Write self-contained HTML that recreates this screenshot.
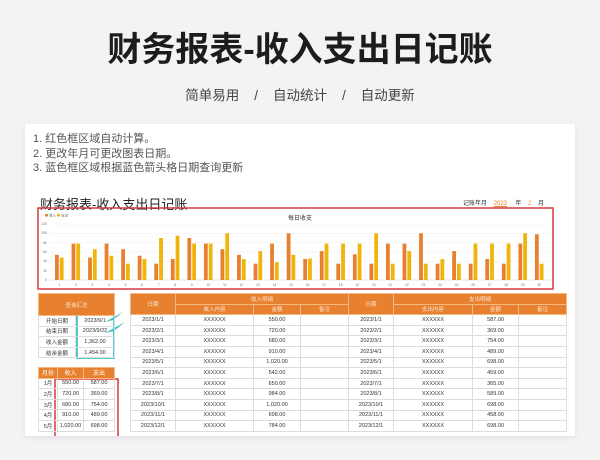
<!DOCTYPE html>
<html><head><meta charset="utf-8"><style>
*{margin:0;padding:0;box-sizing:border-box}
body{width:600px;height:460px;background:#f3f3f4;font-family:"Liberation Sans","Noto Sans CJK SC",sans-serif;position:relative;overflow:hidden}
.h1{position:absolute;top:22px;left:0;width:600px;text-align:center;font-size:34px;font-weight:bold;color:#1c1c1c;letter-spacing:0px}
.sub{position:absolute;top:84px;left:0;width:600px;text-align:center;font-size:13.5px;color:#444;word-spacing:0}
.card{position:absolute;left:25px;top:124px;width:550px;height:312px;background:#fff;box-shadow:0 2px 6px rgba(0,0,0,.08);overflow:hidden}
.abs{position:absolute}
.notes{left:8px;top:8px;font-size:11px;color:#555;line-height:14.5px}
.t{font-size:6px;color:#333;text-align:center}
table{border-collapse:collapse;position:absolute;table-layout:fixed}
td{border:1px solid #ddd;font-size:5.5px;color:#333;text-align:center;height:10.6px;padding:0;white-space:nowrap;overflow:hidden}
td.o{background:#e8812f;color:#fde6d0;border-color:#f5b880}
</style></head><body>
<div class="h1">财务报表-收入支出日记账</div>
<div class="sub">简单易用 &nbsp;&nbsp;&nbsp;/&nbsp;&nbsp;&nbsp; 自动统计 &nbsp;&nbsp;&nbsp;/&nbsp;&nbsp;&nbsp; 自动更新</div>
<div class="card">
<div class="abs notes">1. 红色框区域自动计算。<br>2. 更改年月可更改图表日期。<br>3. 蓝色框区域根据蓝色箭头格日期查询更新</div>
<div class="abs" style="left:15px;top:70px;font-size:13px;color:#222">财务报表-收入支出日记账</div>
<div class="abs" style="left:438px;top:74px;font-size:6px;color:#333">记账年月 &nbsp;&nbsp;&nbsp;<span style="color:#e8812f;text-decoration:underline">2023</span> &nbsp;&nbsp;&nbsp;&nbsp;年 &nbsp;&nbsp;&nbsp;<span style="color:#e8812f">2</span> &nbsp;&nbsp;&nbsp;月</div>
<svg class="abs" style="left:0;top:0" width="550" height="312">
<rect x="13" y="84" width="515" height="81" fill="none" stroke="#d9393f" stroke-width="1.5"/>
<text x="275" y="96" font-size="6" text-anchor="middle" fill="#333" font-family="Noto Sans CJK SC">每日收支</text>
<rect x="20" y="90" width="3" height="2.5" fill="#e8812f"/><text x="24" y="92.5" font-size="3.5" fill="#666">收入</text>
<rect x="32" y="90" width="3" height="2.5" fill="#f0b50a"/><text x="36" y="92.5" font-size="3.5" fill="#666">支出</text>
<g stroke="#eee" stroke-width="0.5">
<line x1="25" x2="525" y1="100" y2="100"/><line x1="25" x2="525" y1="109.3" y2="109.3"/><line x1="25" x2="525" y1="118.7" y2="118.7"/><line x1="25" x2="525" y1="128" y2="128"/><line x1="25" x2="525" y1="137.3" y2="137.3"/><line x1="25" x2="525" y1="146.7" y2="146.7"/><line x1="25" x2="525" y1="156" y2="156" stroke="#ccc"/>
</g>
<g font-size="3.5" fill="#777" text-anchor="end"><text x="22" y="101">120</text><text x="22" y="110">100</text><text x="22" y="120">80</text><text x="22" y="129">60</text><text x="22" y="138">40</text><text x="22" y="148">20</text><text x="22" y="157">0</text></g>
<g id="bars"></g>
<g id="xl" font-size="3.5" fill="#777" text-anchor="middle"></g>
<rect x="52" y="190" width="37" height="44" fill="none" stroke="#3cc3c8" stroke-width="1.8"/>
<path d="M80 198 L98 188 L88 196 Z M80 209 L100 198 L89 207 Z" fill="#3cc3c8"/>
<rect x="30" y="255" width="63" height="60" fill="none" stroke="#d9393f" stroke-width="1.5"/>
</svg>
<table style="left:13px;top:169px;width:76px">
<col style="width:37px"><col style="width:39px">
<tr><td class="o" colspan="2" style="height:22px">查询汇总</td></tr>
<tr><td>开始日期</td><td>2023/9/1</td></tr>
<tr><td>结束日期</td><td>2023/9/22</td></tr>
<tr><td>收入金额</td><td>1,362.00</td></tr>
<tr><td>结余金额</td><td>1,454.00</td></tr>
</table>
<table style="left:13px;top:243px;width:76px">
<col style="width:19px"><col style="width:26px"><col style="width:31px">
<tr><td class="o" style="font-size:6px;color:#fff">月份</td><td class="o" style="font-size:6px;color:#fff">收入</td><td class="o" style="font-size:6px;color:#fff">支出</td></tr>
<tr><td>1月</td><td>550.00</td><td>587.00</td></tr>
<tr><td>2月</td><td>720.00</td><td>369.00</td></tr>
<tr><td>3月</td><td>680.00</td><td>754.00</td></tr>
<tr><td>4月</td><td>910.00</td><td>489.00</td></tr>
<tr><td>5月</td><td>1,020.00</td><td>698.00</td></tr>
</table>
<table style="left:105px;top:169px;width:436px">
<col style="width:45px"><col style="width:78px"><col style="width:47px"><col style="width:48px"><col style="width:45px"><col style="width:79px"><col style="width:46px"><col style="width:48px">
<tr><td class="o" rowspan="2">日期</td><td class="o" colspan="3">收入明细</td><td class="o" rowspan="2">日期</td><td class="o" colspan="3">支出明细</td></tr>
<tr><td class="o">收入内容</td><td class="o">金额</td><td class="o">备注</td><td class="o">支出内容</td><td class="o">金额</td><td class="o">备注</td></tr>
<tr><td>2023/1/1</td><td>XXXXXX</td><td>550.00</td><td></td><td>2023/1/1</td><td>XXXXXX</td><td>587.00</td><td></td></tr>
<tr><td>2023/2/1</td><td>XXXXXX</td><td>720.00</td><td></td><td>2023/2/1</td><td>XXXXXX</td><td>369.00</td><td></td></tr>
<tr><td>2023/3/1</td><td>XXXXXX</td><td>680.00</td><td></td><td>2023/3/1</td><td>XXXXXX</td><td>754.00</td><td></td></tr>
<tr><td>2023/4/1</td><td>XXXXXX</td><td>910.00</td><td></td><td>2023/4/1</td><td>XXXXXX</td><td>489.00</td><td></td></tr>
<tr><td>2023/5/1</td><td>XXXXXX</td><td>1,020.00</td><td></td><td>2023/5/1</td><td>XXXXXX</td><td>698.00</td><td></td></tr>
<tr><td>2023/6/1</td><td>XXXXXX</td><td>542.00</td><td></td><td>2023/6/1</td><td>XXXXXX</td><td>459.00</td><td></td></tr>
<tr><td>2023/7/1</td><td>XXXXXX</td><td>650.00</td><td></td><td>2023/7/1</td><td>XXXXXX</td><td>365.00</td><td></td></tr>
<tr><td>2023/8/1</td><td>XXXXXX</td><td>984.00</td><td></td><td>2023/8/1</td><td>XXXXXX</td><td>589.00</td><td></td></tr>
<tr><td>2023/10/1</td><td>XXXXXX</td><td>1,020.00</td><td></td><td>2023/10/1</td><td>XXXXXX</td><td>698.00</td><td></td></tr>
<tr><td>2023/11/1</td><td>XXXXXX</td><td>698.00</td><td></td><td>2023/11/1</td><td>XXXXXX</td><td>458.00</td><td></td></tr>
<tr><td>2023/12/1</td><td>XXXXXX</td><td>784.00</td><td></td><td>2023/12/1</td><td>XXXXXX</td><td>698.00</td><td></td></tr>
</table>
</div>
<script>
var d=[[54,48],[78,78],[48,66],[78,52],[66,35],[52,45],[35,90],[45,95],[90,78],[78,78],[66,100],[54,45],[35,62],[78,38],[100,54],[45,46],[62,78],[35,78],[55,78],[35,100],[78,35],[78,62],[100,35],[35,45],[62,35],[35,78],[45,78],[35,78],[78,100],[98,35]];
var s="",l="",k=56/120;
for(var i=0;i<30;i++){var x=30+16.55*i;
s+='<rect x="'+x+'" y="'+(156-d[i][0]*k)+'" width="3.8" height="'+d[i][0]*k+'" fill="#e8812f"/>';
s+='<rect x="'+(x+4.8)+'" y="'+(156-d[i][1]*k)+'" width="3.8" height="'+d[i][1]*k+'" fill="#f0b50a"/>';
l+='<text x="'+(x+4.3)+'" y="162">'+(i+1)+'</text>';}
document.getElementById("bars").innerHTML=s;document.getElementById("xl").innerHTML=l;
</script>
</body></html>
